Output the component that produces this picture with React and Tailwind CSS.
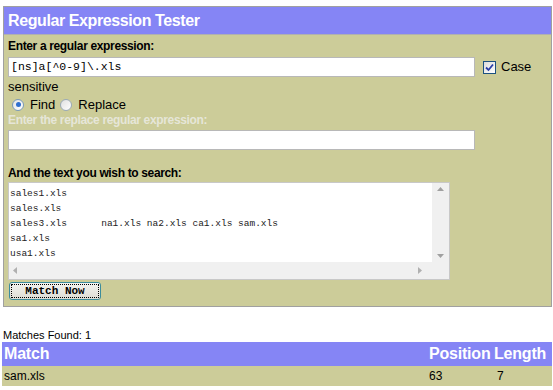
import React from 'react'

const lines = ['sales1.xls', 'sales.xls', 'sales3.xls      na1.xls na2.xls ca1.xls sam.xls', 'sa1.xls', 'usa1.xls']

export default function App() {
  return (
    <div className="w-[553px] h-[390px] bg-white overflow-hidden font-['Liberation_Sans',Arial,sans-serif] text-[12px] text-black">
      <div className="pt-[6px] pl-[3px] pr-[1px]">
        <div className="border border-[#a0a0a0] bg-[#cccc99]">
          <div className="h-[28px] bg-[#8585f5] text-white font-bold text-[16px] tracking-[-0.4px] leading-[28px] pl-[4px] border-b border-[#b0b0b0]">
            Regular Expression Tester
          </div>
          <div className="pl-[4px] pt-[4px] pb-[6px]">
            <div className="font-bold leading-[15px] h-[16px] tracking-[-0.35px]">Enter a regular expression:</div>
            <div className="flex items-center h-[22px] mt-[1px]">
              <div className="w-[467px] h-[20px] bg-white border border-[#b8b8b8] font-['Liberation_Mono',monospace] text-[11.5px] leading-[18px] pl-[2px]">
                [ns]a[^0-9]\.xls
              </div>
              <div className="ml-[8px] w-[13px] h-[13px] border border-[#1c5180] bg-gradient-to-br from-[#dcdcdc] to-white flex items-center justify-center">
                <svg width="9" height="9" viewBox="0 0 9 9"><path d="M1 4.5 L3.5 7 L8 1.5" stroke="#2a3ea8" strokeWidth="1.8" fill="none" /></svg>
              </div>
              <span className="ml-[5px] text-[13px]">Case</span>
            </div>
            <div className="text-[13px] leading-[16px] mt-[1px]">sensitive</div>
            <div className="flex items-center h-[17px] mt-[1px] text-[13px]">
              <div className="ml-[4px] w-[12px] h-[12px] rounded-full border border-[#7a9ab8] bg-gradient-to-br from-[#e4e4e4] to-white flex items-center justify-center">
                <div className="w-[5px] h-[5px] rounded-full bg-[#2f6fcf]" />
              </div>
              <span className="ml-[6px]">Find</span>
              <div className="ml-[5px] w-[12px] h-[12px] rounded-full border border-[#9aaab8] bg-gradient-to-br from-[#e0e0e0] to-white" />
              <span className="ml-[6px]">Replace</span>
            </div>
            <div className="font-bold leading-[15px] h-[16px] tracking-[-0.35px] text-[#e6e6d8]">Enter the replace regular expression:</div>
            <div className="w-[467px] h-[20px] bg-white border border-[#b8b8b8] mt-[1px]" />
            <div className="font-bold leading-[15px] h-[16px] mt-[16px] tracking-[-0.35px]">And the text you wish to search:</div>
            <div className="w-[442px] h-[98px] border border-[#c8c8c8] bg-white flex flex-col">
              <div className="flex flex-1 min-h-0">
                <div className="flex-1 font-['Liberation_Mono',monospace] text-[9.5px] text-[#222] leading-[15px] pl-[1px] pt-[3px] whitespace-pre overflow-hidden">
                  {lines.map((l, i) => (
                    <div key={i}>{l}</div>
                  ))}
                </div>
                <div className="w-[17px] bg-[#f0f0f0] flex flex-col justify-between items-center py-[4px]">
                  <svg width="7" height="4" viewBox="0 0 7 4"><path d="M0 4 L3.5 0 L7 4 Z" fill="#a0a0a0" /></svg>
                  <svg width="7" height="4" viewBox="0 0 7 4"><path d="M0 0 L3.5 4 L7 0 Z" fill="#a0a0a0" /></svg>
                </div>
              </div>
              <div className="h-[17px] bg-[#f0f0f0] flex items-center justify-between pl-[4px] pr-[27px]">
                <svg width="4" height="7" viewBox="0 0 4 7"><path d="M4 0 L0 3.5 L4 7 Z" fill="#b0b0b0" /></svg>
                <svg width="4" height="7" viewBox="0 0 4 7"><path d="M0 0 L4 3.5 L0 7 Z" fill="#b0b0b0" /></svg>
              </div>
            </div>
            <div className="mt-[2px] ml-[1px] w-[92px] h-[18px] rounded-[3px] border border-[#3c8c9c] bg-gradient-to-b from-[#f4f4f0] to-[#dcdcd4] p-[1px]">
              <div className="h-full border border-dotted border-black flex items-center justify-center font-['Liberation_Mono',monospace] font-bold text-[11px]">
                Match Now
              </div>
            </div>
          </div>
        </div>
      </div>
      <div className="mt-[21px] pl-[3px] leading-[14px] text-[11px]">Matches Found: 1</div>
      <table className="ml-[2px] w-[550px] border-separate border-spacing-0">
        <thead>
          <tr className="bg-[#8585f5] text-white text-[16px] font-bold h-[22px] tracking-[-0.2px]">
            <th className="text-left pl-[2px]">Match</th>
            <th className="text-left w-[66px] pl-[1px]">Position</th>
            <th className="text-left w-[58px]">Length</th>
          </tr>
        </thead>
        <tbody>
          <tr className="bg-[#cccc99] text-[12px] h-[20px]">
            <td className="pl-[2px]">sam.xls</td>
            <td className="pl-[1px]">63</td>
            <td className="pl-[3px]">7</td>
          </tr>
        </tbody>
      </table>
    </div>
  )
}
